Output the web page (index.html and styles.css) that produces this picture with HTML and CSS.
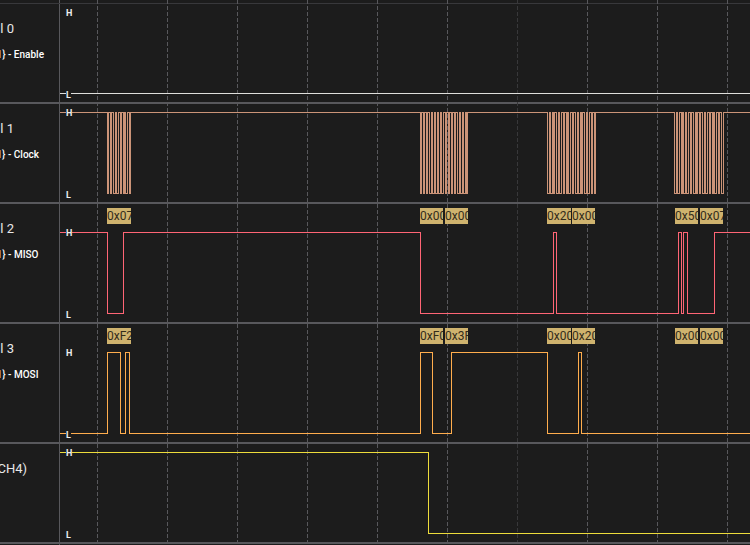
FILE: index.html
```html
<!DOCTYPE html>
<html lang="en">
<head>
<meta charset="utf-8">
<title>Logic analyzer</title>
<link rel="stylesheet" href="styles.css">
</head>
<body>
<main class="analyzer">
  <div class="ruler"></div>
  <section class="channel">
    <div class="label"><div class="name">l 0</div><div class="role">1} - Enable</div></div>
    <div class="track"><svg class="wave white" viewBox="0 0 690 98"><path d="M0 89.5H690"/></svg><b class="level high">H</b><b class="level low">L</b></div>
  </section>
  <section class="channel">
    <div class="label"><div class="name">l 1</div><div class="role">1} - Clock</div></div>
    <div class="track"><svg class="wave clock" viewBox="0 0 690 98"><path id="clock"/></svg><b class="level high">H</b><b class="level low">L</b></div>
  </section>
  <section class="channel decoded">
    <div class="label"><div class="name">l 2</div><div class="role">1} - MISO</div></div>
    <div class="track"><svg class="wave red" viewBox="0 0 690 118"><path d="M0 28.5H47.5V109.5H63.5V28.5H360.5V109.5H493.5V28.5H496.5V109.5H618.5V28.5H621.5V109.5H623.5V28.5H627.5V109.5H654.5V28.5H690"/></svg><b class="level high">H</b><b class="level low">L</b>
    <span class="byte b1 wide">0x07</span><span class="byte b2">0x00</span><span class="byte b3">0x00</span><span class="byte b4 wide">0x20</span><span class="byte b5">0x00</span><span class="byte b6">0x50</span><span class="byte b7">0x07</span></div>
  </section>
  <section class="channel decoded">
    <div class="label"><div class="name">l 3</div><div class="role">1} - MOSI</div></div>
    <div class="track"><svg class="wave orange" viewBox="0 0 690 118"><path d="M0 109.5H47.5V28.5H60.5V109.5H65.5V28.5H69.5V109.5H360.5V28.5H372.5V109.5H391.5V28.5H487.5V109.5H518.5V28.5H521.5V109.5H690"/></svg><b class="level high">H</b><b class="level low">L</b>
    <span class="byte b1 wide">0xF2</span><span class="byte b2">0xF0</span><span class="byte b3">0x3F</span><span class="byte b4 wide">0x00</span><span class="byte b5">0x20</span><span class="byte b6">0x00</span><span class="byte b7">0x00</span></div>
  </section>
  <section class="channel">
    <div class="label"><div class="name">CH4)</div></div>
    <div class="track"><svg class="wave yellow" viewBox="0 0 690 98"><path d="M0 8.5H368.5V89.5H690"/></svg><b class="level high">H</b><b class="level low">L</b></div>
  </section>
  <svg class="grid" viewBox="0 0 750 545"><path d="M97.5 0V542M167.5 0V542M237.5 0V542M307.5 0V542M377.5 0V542M447.5 0V542M587.5 0V542M657.5 0V542M727.5 0V542"/><path class="minor" d="M517.5 0V542"/></svg>
</main>
<script src="clock.js"></script>
</body>
</html>
```
FILE: clock.js
```js
// Clock edge positions; the level toggles at each edge, starting high.
const edges = [
  107,108,110,111,113,115,116,118,120,121,123,124,125,127,129,130,
  420,421,423,424,426,427,429,431,432,434,435,437,438,440,441,443,
  445,446,448,449,451,452,454,455,457,459,460,462,463,465,466,467,
  547,549,550,552,553,554,556,558,559,561,563,564,566,567,568,570,
  572,573,575,577,578,580,581,582,584,586,587,589,591,592,594,595,
  674,676,677,679,681,682,683,685,686,688,690,691,693,695,696,697,
  699,700,702,704,705,707,709,710,712,713,714,716,718,719,721,723
];
let path = "M0 8.5";
let low = false;
for (const x of edges) {
  low = !low;
  path += `H${x - 59.5}V${low ? 89.5 : 8.5}`;
}
document.getElementById("clock").setAttribute("d", path + "H690");
```
FILE: styles.css
```css
* { box-sizing: border-box; }
body { margin: 0; background: #1c1c1c; color: #e8e8e8; font-family: Roboto, "Liberation Sans", sans-serif; overflow: hidden; }
.analyzer { position: relative; width: 750px; height: 545px; background: linear-gradient(#58585c, #58585c) 59px 0 / 1px 100% no-repeat; }
.ruler { height: 4px; border-bottom: 1px solid #38383b; background: linear-gradient(#58585c, #58585c) 0 3px / 60px 1px no-repeat; background-origin: border-box; background-clip: border-box; }
.channel { display: grid; grid-template-columns: 60px 690px; height: 100px; border-bottom: 2px solid #58585c; }
.decoded { height: 120px; }
.label { display: flex; flex-direction: column; align-items: flex-end; overflow: hidden; white-space: nowrap; }
.name { font-size: 13px; line-height: 16px; margin: 17px 46px 0 0; }
.role { font-size: 10px; font-weight: 500; line-height: 14px; margin: 11px 16px 0 0; color: #fff; }
.channel:nth-child(3) .role { margin-right: 21px; }
.channel:nth-child(4) .role, .channel:nth-child(5) .role { margin-right: 21.5px; }
.channel:nth-child(6) .name { margin-right: 33px; }
.track { position: relative; }
.wave { display: block; width: 690px; height: 100%; fill: none; stroke-width: 1; shape-rendering: crispEdges; position: relative; z-index: 2; }
.white { stroke: #dededb; }
.clock { stroke: #cc9478; }
.red { stroke: #ff6575; }
.orange { stroke: #ffad4d; }
.yellow { stroke: #eddc3b; }
.level { position: absolute; z-index: 3; left: 6px; width: 6px; height: 10px; background: #1c1c1c; color: #eee; font-size: 9px; line-height: 10px; font-weight: 700; }
.high { top: 4px; }
.low { bottom: 2px; }
.low { width: 5px; }
.decoded .high { top: 24px; }
.byte { position: absolute; z-index: 2; top: 4px; width: 23px; height: 16px; overflow: hidden; background: #cfb36e; color: #332c1b; font-size: 12px; line-height: 16px; }
.wide { width: 24px; }
.b1 { left: 47px; }
.b2 { left: 360px; }
.b3 { left: 385px; }
.b4 { left: 487px; }
.b5 { left: 512px; }
.b6 { left: 615px; }
.b7 { left: 640px; }
.grid { position: absolute; inset: 0; width: 750px; height: 545px; z-index: 1; stroke: #58585c; stroke-dasharray: 4 2; shape-rendering: crispEdges; pointer-events: none; }
.grid .minor { stroke: #38383a; }
```
